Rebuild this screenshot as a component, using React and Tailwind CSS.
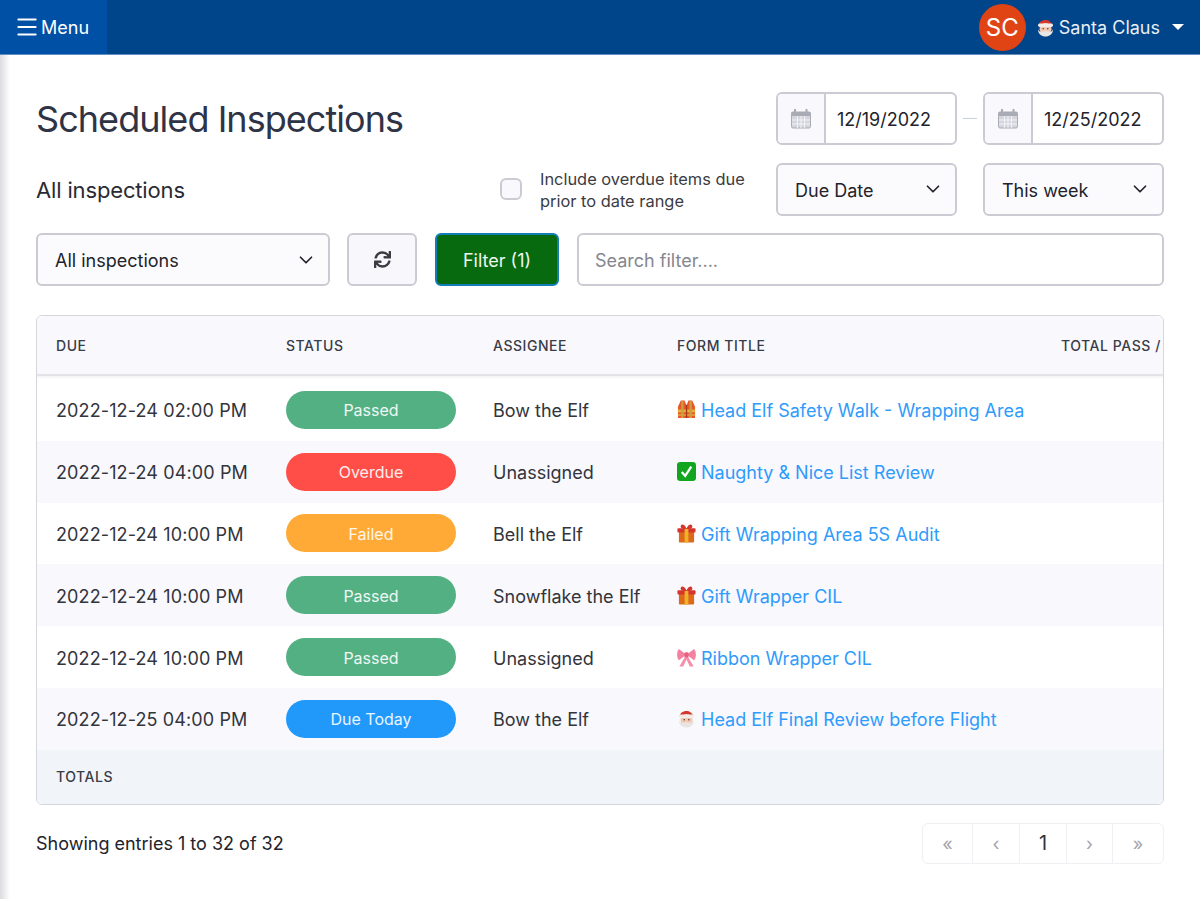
import { ChevronDown, Menu } from "lucide-react";
import { FaSync } from "react-icons/fa";

const rows = [
  { due: "2022-12-24 02:00 PM", status: "Passed", assignee: "Bow the Elf", icon: "vest", title: "Head Elf Safety Walk - Wrapping Area" },
  { due: "2022-12-24 04:00 PM", status: "Overdue", assignee: "Unassigned", icon: "check", title: "Naughty & Nice List Review" },
  { due: "2022-12-24 10:00 PM", status: "Failed", assignee: "Bell the Elf", icon: "gift", title: "Gift Wrapping Area 5S Audit" },
  { due: "2022-12-24 10:00 PM", status: "Passed", assignee: "Snowflake the Elf", icon: "gift", title: "Gift Wrapper CIL" },
  { due: "2022-12-24 10:00 PM", status: "Passed", assignee: "Unassigned", icon: "ribbon", title: "Ribbon Wrapper CIL" },
  { due: "2022-12-25 04:00 PM", status: "Due Today", assignee: "Bow the Elf", icon: "santa", title: "Head Elf Final Review before Flight" },
];

const statusColors = {
  Passed: "bg-[#53b083]",
  Overdue: "bg-[#ff4d47]",
  Failed: "bg-[#ffaa37]",
  "Due Today": "bg-[#2199fb]",
};

function Santa({ className }) {
  return (
    <svg viewBox="1.5 0 17 19" className={className}>
      <path d="M3 8 C3 1 15 -1 17 8 Z" fill="#d4372c" />
      <circle cx="10" cy="11" r="6" fill="#f3c9b4" />
      <rect x="2.5" y="5.5" width="15" height="3.4" rx="1.7" fill="#f1ece7" />
      <path d="M2.5 11 C2 21 18 21 17.5 11 C16.5 14.5 14 14 12.5 13.5 C11 13 9 13 7.5 13.5 C6 14 3.5 14.5 2.5 11 Z" fill="#e9e5e2" />
      <circle cx="7.7" cy="10.8" r="0.8" fill="#5b4034" />
      <circle cx="12.3" cy="10.8" r="0.8" fill="#5b4034" />
    </svg>
  );
}

function RowIcon({ name }) {
  if (name === "vest") {
    return (
      <svg viewBox="0 0 20 20" className="size-[19px] shrink-0">
        <path d="M4 0.5 H8 L10 6 L12 0.5 H16 L19 7 V19 H1 V7 Z" fill="#e8562a" />
        <rect x="1" y="10" width="18" height="3" fill="#e2b23c" />
        <rect x="1" y="15" width="18" height="1.5" fill="#e2b23c" />
        <rect x="4.5" y="1" width="2.4" height="18" fill="#c9a23f" />
        <rect x="13.1" y="1" width="2.4" height="18" fill="#c9a23f" />
        <path d="M9.3 5 H10.7 V19 H9.3 Z" fill="#a63a1c" />
      </svg>
    );
  }
  if (name === "check") {
    return (
      <svg viewBox="0 0 20 20" className="size-[19px] shrink-0">
        <rect x="0" y="0" width="20" height="20" rx="3.5" fill="#12a51f" />
        <path d="M5 10.5 L8.6 14.5 L15 4.8" fill="none" stroke="#fff" strokeWidth="2.4" />
      </svg>
    );
  }
  if (name === "gift") {
    return (
      <svg viewBox="0 0 20 20" className="size-[19px] shrink-0">
        <rect x="2" y="8" width="16" height="11.5" rx="1" fill="#dd6a1a" />
        <rect x="0.5" y="4.5" width="19" height="4.5" rx="1" fill="#d4352c" />
        <rect x="8" y="4.5" width="4" height="15" fill="#efb02a" />
        <path d="M10 5 C5 6 2.5 3 4.5 1 C7 -0.5 9 2.5 10 5 C11 2.5 13 -0.5 15.5 1 C17.5 3 15 6 10 5 Z" fill="#d4352c" />
      </svg>
    );
  }
  if (name === "ribbon") {
    return (
      <svg viewBox="0 0 20 20" className="size-[19px] shrink-0">
        <path d="M10 7 L2 1 C-0.5 4 -0.5 10 2 13 Z" fill="#f4819f" />
        <path d="M10 7 L18 1 C20.5 4 20.5 10 18 13 Z" fill="#f4819f" />
        <path d="M8.5 9 L2.5 19.5 H6.5 L10 12 L13.5 19.5 H17.5 L11.5 9 Z" fill="#f58fab" />
        <rect x="7.8" y="4.5" width="4.4" height="5.5" rx="1.5" fill="#e9607f" />
      </svg>
    );
  }
  return <Santa className="size-[19px] shrink-0" />;
}

function CalendarIcon() {
  return (
    <svg viewBox="0 0 20 20" className="size-5" fill="none">
      <rect x="0.5" y="3" width="19" height="16" rx="1.5" fill="#d5d6dd" stroke="#a9abb5" />
      <rect x="0.5" y="3" width="19" height="4" fill="#a9abb5" />
      <path d="M4 0.5 V5 M15.5 0.5 V5" stroke="#a9abb5" strokeWidth="2" strokeLinecap="round" />
      <path d="M6.5 7 V19 M10 7 V19 M13.5 7 V19 M1 11 H19 M1 15 H19" stroke="#f2f2f6" strokeWidth="1" />
    </svg>
  );
}

function DateInput({ value }) {
  return (
    <div className="flex h-[53px] w-[181px] overflow-hidden rounded-md border-2 border-[#cbccd3] bg-white">
      <div className="flex w-[48px] items-center justify-center border-r-2 border-[#cbccd3] bg-[#f8f8fd]">
        <CalendarIcon />
      </div>
      <div className="flex flex-1 items-center pl-[11px] pt-[2px] text-[18px] text-[#22232b]">{value}</div>
    </div>
  );
}

function SelectBox({ label, className }) {
  return (
    <div className={`flex h-[53px] items-center justify-between rounded-md border-2 border-[#cbccd3] bg-[#fbfbfe] pl-[17px] pr-[11px] text-[18px] text-[#22232b] ${className}`}>
      <span className="pt-[2px]">{label}</span>
      <ChevronDown className="size-[22px]" strokeWidth={1.9} />
    </div>
  );
}

export default function App() {
  return (
    <div className="relative h-[899px] w-[1200px] overflow-hidden bg-white font-['Inter',sans-serif]">
      <header className="flex h-[55px] items-stretch justify-between border-b border-[#5f8fc0] bg-[#00448a] text-white">
        <div className="flex w-[107px] items-center gap-px bg-[#0050a6] pl-[14px] text-[18px]">
          <Menu className="size-[26px] shrink-0" strokeWidth={1.8} />
          <span>Menu</span>
        </div>
        <div className="flex items-center pr-[16px]">
          <div className="flex size-[47px] items-center justify-center rounded-full bg-[#e04414] pt-[2px] text-[24px]">SC</div>
          <Santa className="ml-[10px] size-[19px]" />
          <span className="ml-[4px] text-[18px] text-[#e9eef5]">Santa Claus</span>
          <div className="ml-[12px] h-0 w-0 border-x-[6px] border-t-[6px] border-x-transparent border-t-white"></div>
        </div>
      </header>

      {/* left edge shadow from the side menu */}
      <div className="pointer-events-none absolute bottom-0 left-0 top-[55px] w-[10px] bg-gradient-to-r from-[#dcdce0] to-white"></div>

      <main className="px-[36px] pt-[37px]">
        <div className="flex items-center justify-between">
          <h1 className="pt-[2px] text-[36px] leading-[51px] tracking-[-0.95px] text-[#2f3346]">Scheduled Inspections</h1>
          <div className="flex items-center">
            <DateInput value="12/19/2022" />
            <div className="mx-[6px] h-px w-[14px] bg-[#c5d2de]"></div>
            <DateInput value="12/25/2022" />
          </div>
        </div>

        <div className="mt-[18px] flex h-[52px] items-center">
          <h2 className="pt-[2px] text-[22px] tracking-[-0.15px] text-[#2a2b33]">All inspections</h2>
          <div className="ml-auto flex items-center">
            <div className="size-[22px] rounded-md border-2 border-[#cbccd3] bg-[#f8f8fd]"></div>
            <p className="ml-[18px] w-[224px] pt-[2px] text-[16.4px] leading-[22px] text-[#3a3b43]">
              Include overdue items due prior to date range
            </p>
          </div>
          <SelectBox label="Due Date" className="ml-[12px] w-[181px]" />
          <SelectBox label="This week" className="ml-[26px] w-[181px]" />
        </div>

        <div className="mt-[18px] flex items-center">
          <SelectBox label="All inspections" className="w-[294px]" />
          <div className="ml-[17px] flex h-[53px] w-[70px] items-center justify-center rounded-md border-2 border-[#cbccd3] bg-[#f8f8fc]">
            <FaSync className="size-[17px] text-[#3a3b43]" />
          </div>
          <div className="ml-[18px] flex h-[53px] w-[124px] items-center justify-center rounded-md border-2 border-[#117fb5] bg-[#086a0e] pt-[2px] text-[18px] text-[#eef6ee]">
            Filter (1)
          </div>
          <div className="ml-[18px] flex h-[53px] flex-1 items-center rounded-md border-2 border-[#cbccd3] bg-white pl-[16px] pt-[2px] text-[18px] text-[#85868e]">
            Search filter....
          </div>
        </div>

        <div className="mt-[29px] overflow-hidden rounded-md border border-[#d5d6dc]">
          <div className="flex h-[60px] items-center border-b-2 border-[#e2e3e8] bg-[#f8f8fd] text-[14px] font-medium tracking-[0.55px] text-[#3a3c47]">
            <div className="w-[249px] shrink-0 pl-[19px]">DUE</div>
            <div className="w-[207px] shrink-0">STATUS</div>
            <div className="w-[184px] shrink-0">ASSIGNEE</div>
            <div className="w-[384px] shrink-0">FORM TITLE</div>
            <div className="whitespace-nowrap">TOTAL PASS /</div>
          </div>
          <div className="h-[3px] bg-gradient-to-b from-[#f3f3f6] to-white"></div>
          {rows.map((row, i) => (
            <div
              key={i}
              className={`flex h-[61.8px] items-center text-[18px] text-[#33343c] ${i % 2 === 1 ? "bg-[#f8f8fd]" : "bg-white"}`}
            >
              <div className="w-[249px] shrink-0 pl-[19px] pt-[2px] tracking-[0.12px]">{row.due}</div>
              <div className="w-[207px] shrink-0">
                <div className={`flex h-[38px] w-[170px] items-center justify-center rounded-full pt-px text-[16px] text-white/90 ${statusColors[row.status]}`}>
                  {row.status}
                </div>
              </div>
              <div className="w-[184px] shrink-0 pt-[2px]">{row.assignee}</div>
              <div className="flex items-center gap-[5px] text-[#2f9bfb]">
                <RowIcon name={row.icon} />
                <span className="pt-[2px]">{row.title}</span>
              </div>
            </div>
          ))}
          <div className="flex h-[54px] items-center bg-[#f1f5fa] pl-[19px] text-[14px] font-medium tracking-[0.55px] text-[#3a3c47]">
            TOTALS
          </div>
        </div>

        <div className="mt-[18px] flex items-center justify-between">
          <span className="text-[18px] text-[#22232b]">Showing entries 1 to 32 of 32</span>
          <div className="flex h-[41px] w-[242px] rounded-md border border-[#efeff4] text-[18px] text-[#a3a4ac]">
            <div className="flex w-[50px] items-center justify-center border-r border-[#efeff4]">«</div>
            <div className="flex w-[47px] items-center justify-center border-r border-[#efeff4]">‹</div>
            <div className="flex w-[47px] items-center justify-center border-r border-[#efeff4] text-[20px] text-[#33343c]">1</div>
            <div className="flex w-[46px] items-center justify-center border-r border-[#efeff4]">›</div>
            <div className="flex flex-1 items-center justify-center">»</div>
          </div>
        </div>
      </main>
    </div>
  );
}
